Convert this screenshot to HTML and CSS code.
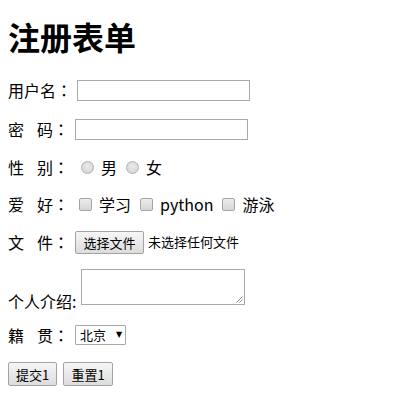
FILE: index.html
```html
<!DOCTYPE html>
<html lang="zh-CN">
<head>
<meta charset="utf-8">
<title>注册表单</title>
<link rel="stylesheet" href="styles.css">
</head>
<body>
<h1 class="title">注册表单</h1>
<form class="form">
  <div class="row r1">
    <span class="lbl lbl-user">用户名<span class="colon">：</span></span>
    <input class="text" type="text">
  </div>
  <div class="row r2">
    <span class="lbl">密<span class="sp"></span>码<span class="colon">：</span></span>
    <input class="text" type="password">
  </div>
  <div class="row r3">
    <span class="lbl">性<span class="sp"></span>别<span class="colon">：</span></span>
    <input class="radio" type="radio" name="sex"><span class="opt">男</span>
    <input class="radio" type="radio" name="sex"><span class="opt">女</span>
  </div>
  <div class="row r4">
    <span class="lbl">爱<span class="sp"></span>好<span class="colon">：</span></span>
    <input class="check" type="checkbox"><span class="opt">学习</span>
    <input class="check" type="checkbox"><span class="opt">python</span>
    <input class="check" type="checkbox"><span class="opt">游泳</span>
  </div>
  <div class="row r5">
    <span class="lbl">文<span class="sp"></span>件<span class="colon">：</span></span>
    <button class="btn file-btn" type="button">选择文件</button>
    <span class="file-name">未选择任何文件</span>
  </div>
  <div class="row r6">
    <span class="lbl lbl-intro">个人介绍:</span>
    <span class="ta-wrap">
      <textarea class="ta"></textarea>
      <svg class="grip" width="7" height="7" viewBox="0 0 7 7"><path d="M6.5 0.5 L0.5 6.5 M6.5 3.5 L3.5 6.5" stroke="#8a8a8a" stroke-width="1" fill="none"/></svg>
    </span>
  </div>
  <div class="row r7">
    <span class="lbl">籍<span class="sp"></span>贯<span class="colon">：</span></span>
    <span class="select"><span class="sel-val">北京</span><span class="sel-arrow">▼</span></span>
  </div>
  <div class="row r8">
    <button class="btn act" type="submit">提交1</button>
    <button class="btn act" type="reset">重置1</button>
  </div>
</form>
</body>
</html>
```
FILE: styles.css
```css
html, body {
  background: #fff;
}
body {
  margin: 8px;
  font-family: "Noto Sans CJK SC", "Open Sans", sans-serif;
  font-size: 16px;
  color: #000;
}
.title {
  font-size: 32px;
  line-height: 40px;
  font-weight: bold;
  margin: 8px 0 23px;
}
.form {
  display: flex;
  flex-direction: column;
}
.row {
  display: flex;
  align-items: center;
  height: 22px;
  line-height: 22px;
}
.r2 { margin-top: 17px; }
.r3 { margin-top: 16px; }
.r4 { margin-top: 15px; }
.r5 { margin-top: 16px; }
.r6 { margin-top: 16px; height: 36px; align-items: flex-end; }
.r7 { margin-top: 19px; }
.r8 { margin-top: 16px; height: 24px; }

.lbl {
  display: inline-flex;
  white-space: nowrap;
}
.colon {
  font-family: "Noto Sans CJK TC", "Noto Sans CJK SC", sans-serif;
}
.sp {
  display: inline-block;
  width: 13px;
}
.r1 .lbl { margin-right: 5px; }
.r2 .lbl { margin-right: 6px; }
.r5 .lbl { margin-right: 6px; }
.r7 .lbl { margin-right: 6px; }
.lbl-intro {
  margin-right: 5px;
  margin-bottom: -7px;
}

.text {
  box-sizing: border-box;
  width: 173px;
  height: 21px;
  margin: 0;
  padding: 1px 2px;
  border: 1px solid #a9a9a9;
  background: #fff;
  outline: none;
}

.radio, .check {
  -webkit-appearance: none;
  appearance: none;
  box-sizing: border-box;
  width: 13px;
  height: 13px;
  margin: 0 7px 0 5px;
  border: 1px solid #aaa;
  background: linear-gradient(#e4e4e4, #d3d3d3);
}
.radio {
  border-radius: 50%;
  border-color: #b0b0b0;
  background: radial-gradient(circle at 50% 40%, #ececec, #cfcfcf);
}
.r3 .radio:first-of-type { margin-left: 12px; }
.check {
  border-radius: 2px;
  background: linear-gradient(#ececec, #d6d6d6);
  border-color: #a5a5a5;
}
.r4 .check:first-of-type { margin-left: 10px; }
.opt {
  margin-right: 4px;
}

.btn {
  box-sizing: border-box;
  margin: 0;
  height: 23px;
  padding: 0 6px;
  font-family: "Noto Sans CJK SC", sans-serif;
  font-size: 13px;
  line-height: 21px;
  color: #000;
  border: 1px solid #a3a3a3;
  border-radius: 2px;
  background: linear-gradient(#f6f6f6, #dcdcdc);
}
.file-btn {
  width: 69px;
}
.file-name {
  font-size: 13px;
  margin-left: 4px;
}

.ta-wrap {
  display: inline-flex;
  position: relative;
}
.ta {
  box-sizing: border-box;
  width: 164px;
  height: 36px;
  margin: 0;
  padding: 2px;
  border: 1px solid #a9a9a9;
  resize: none;
  outline: none;
  display: block;
}
.grip {
  position: absolute;
  right: 2px;
  bottom: 2px;
}

.select {
  box-sizing: border-box;
  display: inline-flex;
  align-items: center;
  height: 20px;
  width: 51px;
  padding: 0 3px 0 4px;
  border: 1px solid #a9a9a9;
  border-radius: 1px;
  font-size: 13px;
  line-height: 18px;
}
.sel-val { flex: 1; }
.sel-arrow {
  font-size: 8px;
  font-family: "DejaVu Sans", sans-serif;
}

.act {
  height: 24px;
  width: 49px;
  padding: 0;
}
.act + .act {
  margin-left: 6px;
  width: 50px;
}
```
